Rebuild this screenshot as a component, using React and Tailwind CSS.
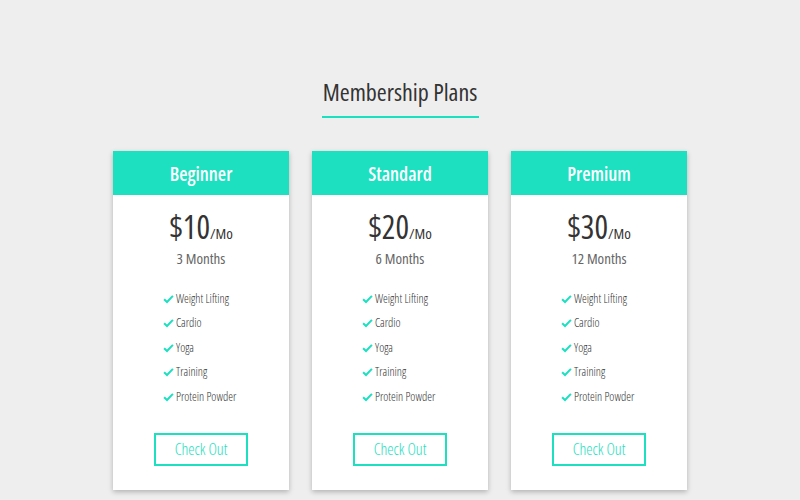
import React from 'react';

const plans = [
  { name: 'Beginner', price: '$10', period: '3 Months' },
  { name: 'Standard', price: '$20', period: '6 Months' },
  { name: 'Premium', price: '$30', period: '12 Months' },
];

const features = ['Weight Lifting', 'Cardio', 'Yoga', 'Training', 'Protein Powder'];

function Check() {
  return (
    <svg width="11" height="10" viewBox="0 0 12 10" className="mr-[2px] shrink-0">
      <path d="M1.2 5.2 L4.4 8.3 L10.8 1.6" fill="none" stroke="#1de0c0" strokeWidth="2.2" />
    </svg>
  );
}

function PlanCard({ plan }) {
  return (
    <div className="w-[176px] bg-white shadow-[0_2px_5px_rgba(0,0,0,0.25)] flex flex-col items-center">
      <div className="w-full h-[44px] bg-[#1de0c0] flex items-center justify-center text-white text-[19px] font-semibold pt-[2px]">
        {plan.name}
      </div>
      <div className="mt-[12px] flex items-baseline text-[#333]">
        <span className="text-[32px] leading-[40px]">{plan.price}</span>
        <span className="text-[15px]">/Mo</span>
      </div>
      <div className="mt-[1px] text-[15px] font-medium text-[#666] leading-[20px]">{plan.period}</div>
      <ul className="mt-[21px] flex flex-col gap-[5px] self-start ml-[50px] text-[12px] font-light text-[#333]">
        {features.map((f) => (
          <li key={f} className="flex items-center h-[19.5px]">
            <Check />
            {f}
          </li>
        ))}
      </ul>
      <button className="mt-[26px] mb-[24px] w-[94px] h-[33px] border-2 border-[#1de0c0] text-[#1de0c0] text-[16px] font-light">
        Check Out
      </button>
    </div>
  );
}

export default function App() {
  return (
    <div
      className="w-[800px] h-[500px] bg-[#eeeeee] flex flex-col items-center overflow-hidden"
      style={{ fontFamily: '"Open Sans", sans-serif', fontStretch: 'condensed' }}
    >
      <h1 className="mt-[76px] text-[24px] text-[#333] leading-[32px]">Membership Plans</h1>
      <div className="mt-[8px] w-[157px] h-[2px] bg-[#1de0c0]" />
      <div className="mt-[33px] flex gap-[23px]">
        {plans.map((p) => (
          <PlanCard key={p.name} plan={p} />
        ))}
      </div>
    </div>
  );
}
